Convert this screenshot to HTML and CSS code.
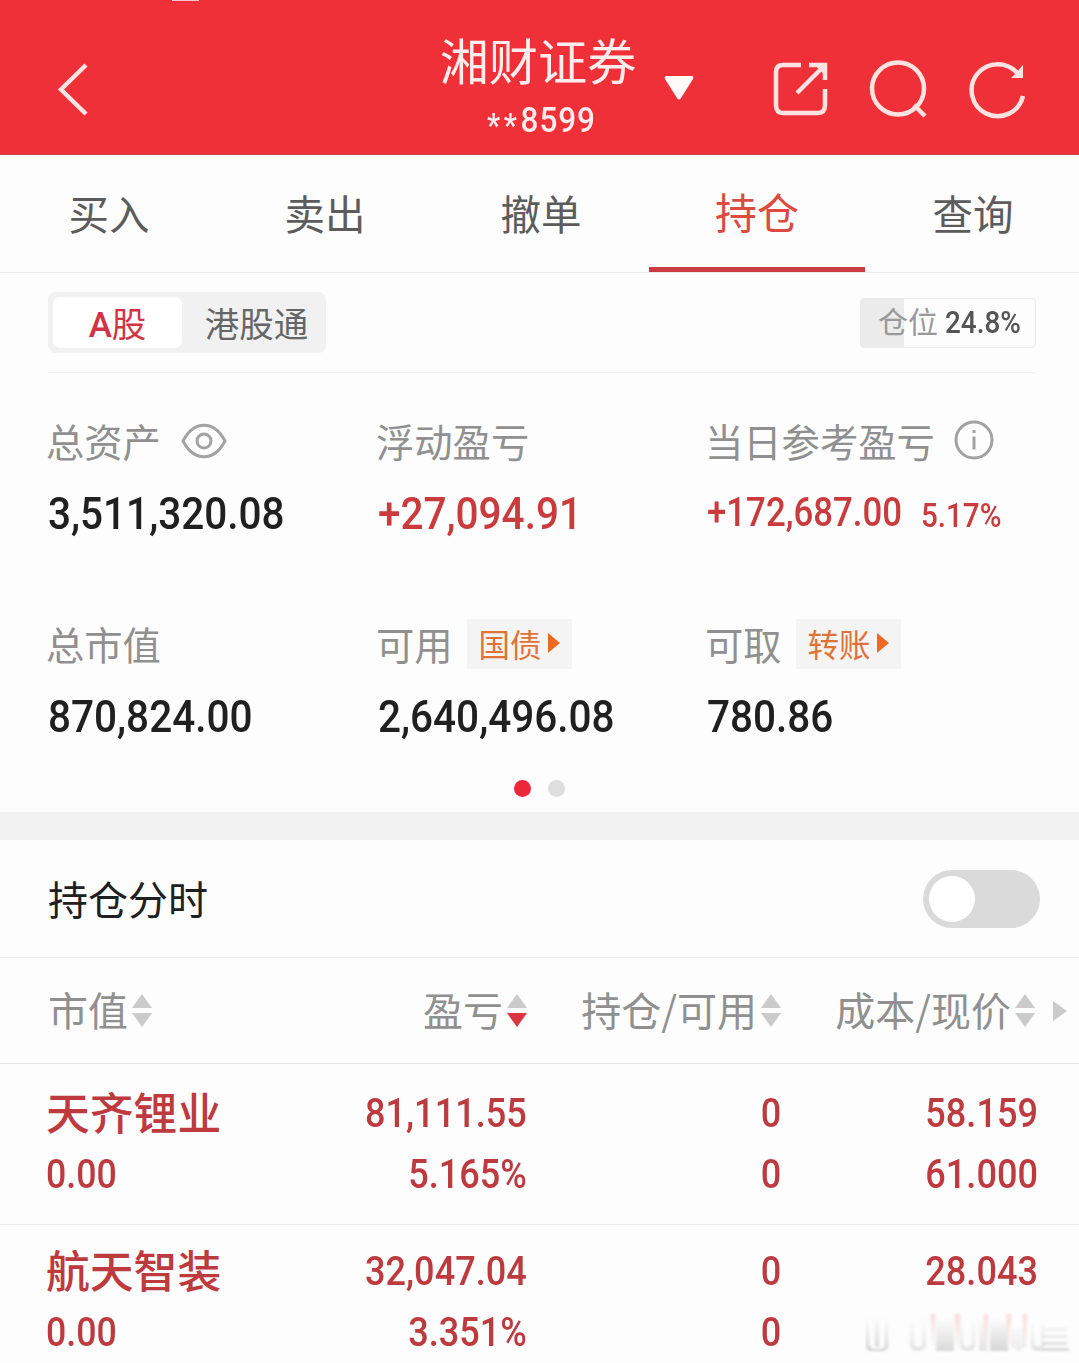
FILE: index.html
```html
<!DOCTYPE html>
<html lang="zh-CN">
<head>
<meta charset="utf-8">
<title>湘财证券</title>
<link rel="stylesheet" href="styles.css">
</head>
<body>
<header class="header">
  <i class="notch"></i>
  <svg class="back" width="36" height="60" viewBox="0 0 36 60"><path d="M31 5 6 29.500 31 54"/></svg>
  <div class="account">
    <div class="broker">湘财证券</div>
    <div class="acct-no"><span class="num"><span class="stars">**</span>8599</span></div>
  </div>
  <svg class="caret" width="30" height="26" viewBox="0 0 30 26"><path d="M2 1H28Q30 1 29 4L17 23Q15 26 13 23L1 4Q0 1 2 1Z"/></svg>
  <div class="actions">
    <svg width="56" height="60" viewBox="0 0 56 60"><path d="M28 5H10Q3 5 3 12V45Q3 53 10 53H45Q52 53 52 45V29M24 33 49 8M36 5H52V20"/><path class="solid" d="M41 4H54V18Z"/></svg>
    <svg width="60" height="60" viewBox="0 0 60 60"><circle cx="29" cy="28.500" r="26"/><path d="M45 45 56 56"/></svg>
    <svg width="58" height="60" viewBox="0 0 58 60"><path d="M54 36A26 26 0 1 1 49 14"/><path class="solid" d="M54 5V18H42L47 13Z"/></svg>
  </div>
</header>

<nav class="tabs">
  <a class="tab">买入</a>
  <a class="tab">卖出</a>
  <a class="tab">撤单</a>
  <a class="tab active">持仓</a>
  <a class="tab">查询</a>
</nav>

<section class="summary">
  <div class="market">
    <div class="segment"><span class="seg on"><b>A</b>股</span><span class="seg">港股通</span></div>
    <div class="position"><span>仓位</span><span class="num pct">24.8%</span></div>
  </div>
  <div class="metrics">
    <div class="metric">
      <div class="label">总资产<svg class="eye" width="46" height="36" viewBox="0 0 46 36"><path d="M2 18C13-3 33-3 44 18C33 39 13 39 2 18Z"/><circle cx="23" cy="18" r="7"/></svg></div>
      <div class="value"><span class="num">3,511,320.08</span></div>
    </div>
    <div class="metric">
      <div class="label">浮动盈亏</div>
      <div class="value red"><span class="num">+27,094.91</span></div>
    </div>
    <div class="metric">
      <div class="label">当日参考盈亏<svg class="info" width="40" height="40" viewBox="0 0 40 40"><circle cx="20" cy="20" r="18"/><path d="M20 16.500V29.500M20 10V13"/></svg></div>
      <div class="value red daily"><span class="num">+172,687.00</span><span class="num rate">5.17%</span></div>
    </div>
    <div class="metric">
      <div class="label">总市值</div>
      <div class="value"><span class="num">870,824.00</span></div>
    </div>
    <div class="metric">
      <div class="label">可用<span class="chip">国债<svg width="12" height="20" viewBox="0 0 12 20"><path d="M0 0 12 10 0 20Z"/></svg></span></div>
      <div class="value"><span class="num">2,640,496.08</span></div>
    </div>
    <div class="metric">
      <div class="label">可取<span class="chip">转账<svg width="12" height="20" viewBox="0 0 12 20"><path d="M0 0 12 10 0 20Z"/></svg></span></div>
      <div class="value"><span class="num">780.86</span></div>
    </div>
  </div>
  <div class="dots"><i class="dot on"></i><i class="dot"></i></div>
</section>

<section class="intraday">
  <span class="caption">持仓分时</span>
  <span class="switch"><i></i></span>
</section>

<section class="holdings">
  <div class="row head">
    <div class="c1"><span>市值</span><svg class="sort" width="20" height="34" viewBox="0 0 20 34"><path d="M10 0 20 14H0Z"/><path d="M0 19H20L10 33Z"/></svg></div>
    <div class="c2"><span>盈亏</span><svg class="sort" width="20" height="34" viewBox="0 0 20 34"><path d="M10 0 20 14H0Z"/><path class="down" d="M0 19H20L10 33Z"/></svg></div>
    <div class="c3"><span>持仓/可用</span><svg class="sort" width="20" height="34" viewBox="0 0 20 34"><path d="M10 0 20 14H0Z"/><path d="M0 19H20L10 33Z"/></svg></div>
    <div class="c4"><span>成本/现价</span><svg class="sort" width="20" height="34" viewBox="0 0 20 34"><path d="M10 0 20 14H0Z"/><path d="M0 19H20L10 33Z"/></svg></div>
    <svg class="more" width="14" height="20" viewBox="0 0 14 20"><path d="M0 0 14 10 0 20Z"/></svg>
  </div>
  <div class="row stock">
    <div class="c1"><span class="name">天齐锂业</span><span class="num">0.00</span></div>
    <div class="c2"><span class="num ones">81,111.55</span><span class="num">5.165%</span></div>
    <div class="c3"><span class="num">0</span><span class="num">0</span></div>
    <div class="c4"><span class="num">58.159</span><span class="num">61.000</span></div>
  </div>
  <div class="row stock second">
    <div class="c1"><span class="name">航天智装</span><span class="num">0.00</span></div>
    <div class="c2"><span class="num">32,047.04</span><span class="num">3.351%</span></div>
    <div class="c3"><span class="num">0</span><span class="num">0</span></div>
    <div class="c4"><span class="num">28.043</span></div>
  </div>
  <svg class="smudge" width="206" height="42" viewBox="0 0 206 42">
    <defs>
      <linearGradient id="fade" x1="0" y1="0" x2="0" y2="42" gradientUnits="userSpaceOnUse"><stop offset=".1" stop-color="#bbb" stop-opacity="0"/><stop offset="1" stop-color="#aaa" stop-opacity=".6"/></linearGradient>
      <linearGradient id="pink" x1="0" y1="0" x2="0" y2="42" gradientUnits="userSpaceOnUse"><stop offset="0" stop-color="#f6a5a5" stop-opacity=".45"/><stop offset=".8" stop-color="#eee" stop-opacity=".3"/></linearGradient>
      <filter id="soft"><feGaussianBlur stdDeviation="1.6 .8"/></filter>
    </defs>
    <g filter="url(#soft)" fill="url(#fade)">
      <path d="M1 3H4V32Q5 36 8 37H17Q20 36 20 32V3H23V34Q22 39 17 39H6Q2 39 1 34ZM10 3H14V35H10Z"/>
      <path opacity=".6" d="M45 8H49V33Q52 37 57 33V3H61V34Q59 39 52 39Q47 39 45 34Z"/>
      <path opacity=".8" d="M71 8H89V39H71Z"/>
      <path opacity=".6" d="M95 8H98V32Q103 37 107 32V8H110V34Q109 39 103 39Q96 39 95 34ZM114 8H122V39H114Z"/>
      <path opacity=".9" d="M125 8H143V39H125Z"/>
      <path opacity=".6" d="M147 16H150V36H147ZM152 16H155V39H152ZM157 16H160V36H157ZM166 12H169V32Q172 37 176 32V12H179V39H171Q167 38 166 34Z"/>
      <path opacity=".8" d="M178 16H202V19H178ZM178 23H202V26H178ZM178 30H202V33H178ZM178 36H204V39H178Z"/>
    </g>
    <g filter="url(#soft)" fill="url(#pink)"><path d="M66 2H70V34H66ZM90 2H95V34H90ZM119 2H123V34H119ZM142 2H146V34H142ZM158 2H162V34H158Z"/></g>
  </svg>
</section>
</body>
</html>
```
FILE: styles.css
```css
* { box-sizing: border-box; }
body {
  margin: 0;
  width: 1079px;
  height: 1363px;
  overflow: hidden;
  background: #fdfdfd;
  color: #202020;
  font-family: "Noto Sans CJK SC", sans-serif;
}
svg { display: block; flex: none; }
.num {
  display: inline-block;
  font-family: Roboto, sans-serif;
  font-weight: 500;
  transform: scaleX(.9);
  transform-origin: left center;
  white-space: nowrap;
}
.red { color: #c93b3c; }

.header {
  position: relative;
  display: flex;
  height: 155px;
  background: #ef3038;
  border-bottom: 1px solid #c64047;
  color: #ffecec;
}
.header svg { fill: none; stroke: #ffe3e1; stroke-width: 4.500; }
.header .solid { fill: #ffe3e1; stroke: none; }
.notch {
  position: absolute;
  left: 172px;
  top: 0;
  width: 27px;
  height: 1px;
  background: #f4c3cc;
}
.back { margin: 60px 0 0 55px; }
.account { width: 200px; margin-left: 347px; text-align: center; }
.broker { height: 90px; padding-top: 23px; font-size: 49.200px; line-height: 72px; }
.acct-no { height: 54px; line-height: 54px; font-size: 35px; }
.acct-no .num { margin-left: 7px; transform-origin: center; letter-spacing: 1px; }
.stars { font-size: 33px; letter-spacing: 4px; vertical-align: -5px; line-height: 20px; }
.header .caret { margin: 75px 0 0 26px; fill: #fffafa; stroke: none; }
.actions { display: flex; gap: 40px; margin: 60px 0 0 79px; }

.tabs { display: flex; height: 118px; padding-left: 1px; border-bottom: 1px solid #ececec; }
.tab {
  flex: none;
  width: 216px;
  height: 117px;
  font-size: 40.500px;
  line-height: 116px;
  text-align: center;
  color: #5c5c5c;
}
.tab.active {
  border-bottom: 5px solid #c83c42;
  font-size: 42px;
  line-height: 111px;
  color: #dc4a40;
}

.summary { height: 567px; padding: 19px 43px 0 48px; border-bottom: 28px solid #f2f2f2; }
.market { display: flex; justify-content: space-between; height: 81px; border-bottom: 1px solid #f0f0f0; }
.segment {
  display: flex;
  width: 278px;
  height: 61px;
  padding: 5px;
  border-radius: 8px;
  background: #f1f1f1;
}
.seg { width: 139px; padding-left: 10px; font-size: 34.500px; line-height: 50px; text-align: center; color: #666; white-space: nowrap; }
.seg b { font: 500 35px Roboto, sans-serif; }
.seg.on { width: 129px; padding-left: 0; border-radius: 7px; background: #fff; color: #d33145; }
.position {
  display: flex;
  width: 176px;
  height: 50px;
  margin-top: 6px;
  padding-left: 17px;
  border: 1px solid #ececec;
  border-radius: 4px;
  background: linear-gradient(90deg, #ebebeb 43px, transparent 43px);
  font-size: 30px;
  line-height: 43px;
  color: #999;
}
.pct { margin-left: 7px; font-size: 31px; line-height: 48px; color: #555; }

.metrics { display: grid; grid-template-columns: 330px 329px 1fr; grid-auto-rows: 203px; height: 400px; padding-top: 33px; }
.label { display: flex; align-items: center; height: 70px; margin-left: -2px; font-size: 38.300px; line-height: 70px; color: #909090; white-space: nowrap; }
.value { height: 74px; margin-top: -2px; font-size: 45px; line-height: 72px; white-space: nowrap; }
.eye, .info { fill: none; stroke: #a2a2a2; stroke-width: 3; }
.eye { margin-left: 20px; }
.info { margin: -3px 0 0 19px; }
.daily { display: flex; padding-top: 3px; font-size: 40px; }
.daily .num { transform: scaleX(.87); }
.daily .rate { margin-left: -10px; font-size: 34px; line-height: 76px; }
.chip {
  display: flex;
  align-items: center;
  width: 105px;
  height: 50px;
  margin-left: 14px;
  padding: 0 0 2px 12px;
  background: #f4f4f4;
  font-size: 31.500px;
  color: #e07238;
}
.chip svg { margin-left: 6px; fill: #ee6a22; }
.dots { display: flex; justify-content: center; gap: 17px; padding-top: 7px; margin-left: -6px; }
.dot { width: 17px; height: 17px; border-radius: 50%; background: #dedede; }
.dot.on { background: #ee2639; }

.intraday {
  display: flex;
  align-items: center;
  justify-content: space-between;
  height: 118px;
  padding: 0 39px 0 48px;
  border-bottom: 1px solid #ececec;
  font-size: 40px;
}
.caption { padding-bottom: 2px; }
.switch { width: 117px; height: 58px; padding: 6px; border-radius: 29px; background: #dadada; }
.switch i { display: block; width: 46px; height: 46px; border-radius: 50%; background: #fff; }

.holdings { position: relative; }
.row { display: grid; grid-template-columns: 200px 279px 254px 257px; padding-left: 48px; }
.row.head {
  grid-template-columns: 200px 279px 254px 254px auto;
  align-items: center;
  height: 106px;
  border-bottom: 1px solid #e6e6e6;
  font-size: 40px;
  color: #909090;
}
.head div { display: flex; align-items: center; justify-content: flex-end; gap: 4px; white-space: nowrap; }
.head span { padding-bottom: 3px; }
.head .c1 { justify-content: flex-start; }
.sort, .more { fill: #cbcbcb; }
.sort .down { fill: #db3341; }
.more { margin-left: 18px; }
.stock { height: 161px; border-bottom: 1px solid #ececec; color: #bd3a3f; font-size: 41px; }
.stock div { display: flex; flex-direction: column; align-items: flex-end; padding-top: 19px; }
.stock.second div { padding-top: 16px; }
.stock .num { height: 61px; line-height: 61px; transform: scaleX(.88); transform-origin: right center; }
.stock .c1 { align-items: flex-start; margin-left: -2px; }
.stock .c1 .num { transform: scaleX(.87); transform-origin: left center; }
.name { height: 61px; font-size: 43.800px; line-height: 56px; font-weight: 500; }
.smudge { position: absolute; right: 8px; top: 354px; }
```
